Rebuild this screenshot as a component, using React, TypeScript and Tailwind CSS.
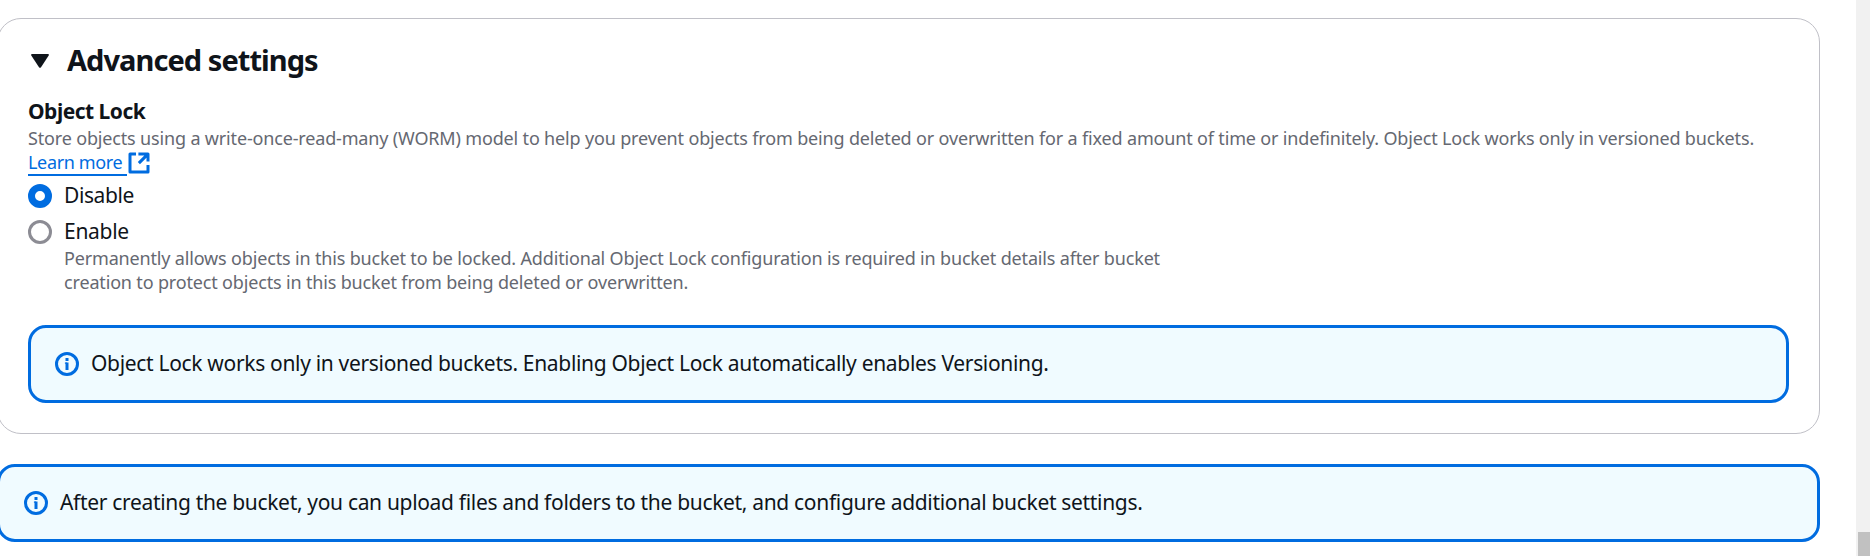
import React from "react";

function InfoIcon() {
  return (
    <svg className="size-6 shrink-0" viewBox="0 0 16 16" fill="none" stroke="#006ce0" strokeWidth="2">
      <circle cx="8" cy="8" r="7" />
      <path d="M8 12V7M8 6V4" />
      <path d="M6.6 7.4H8" strokeWidth=".8" />
    </svg>
  );
}

function ExternalIcon() {
  return (
    <svg className="mt-px size-6 shrink-0" viewBox="0 0 16 16" fill="none" stroke="#006ce0" strokeWidth="2" strokeLinejoin="round">
      <path d="M14 9.4V14H2V2h4M7.6 2H14v5M7.9 8.1l6-6" />
    </svg>
  );
}

function Radio({ checked }: { checked?: boolean }) {
  return checked ? (
    <span className="mt-1 size-6 shrink-0 rounded-full border-[7px] border-[#006ce0] bg-white" />
  ) : (
    <span className="mt-1 size-6 shrink-0 rounded-full border-[3px] border-[#8c8c94] bg-white" />
  );
}

function Alert({ children }: { children: React.ReactNode }) {
  return (
    <div className="flex h-[78px] items-center gap-3 rounded-[18px] border-[3px] border-[#006ce0] bg-[#f0fbff] px-6">
      <InfoIcon />
      {children}
    </div>
  );
}

export default function App() {
  return (
    <div className="flex h-[556px] w-[1870px] justify-between overflow-hidden bg-white font-['Noto_Sans',sans-serif] text-[21px] leading-[30px] text-[#0f141a]">
      <main className="-ml-[3px] flex w-[1823px] shrink-0 flex-col gap-[30px] pt-[18px]">
        <section className="h-[416px] rounded-[24px] border border-[#c0c0c7] px-[30px] pt-[23px]">
          <h2 className="flex h-[54px] items-start text-[29px] leading-9 font-bold">
            <svg className="mt-3 mr-[18px] ml-[3px] h-[14px] w-[18px]" viewBox="0 0 18 14" fill="#0f141a">
              <path d="M1 0h16q1.4.4.7 1.6L10 13.2q-1 1.2-2 0L.3 1.6Q-.4.4 1 0Z" />
            </svg>
            <span className="tracking-[-0.95px]">Advanced settings</span>
          </h2>
          <h3 className="font-bold tracking-[-0.5px]">Object Lock</h3>
          <p className="h-12 text-[18px] leading-6 tracking-[-0.163px] whitespace-nowrap text-[#656871]">
            Store objects using a write-once-read-many (WORM) model to help you prevent objects from being deleted or overwritten for a fixed amount of time or indefinitely. Object Lock works only in versioned buckets.
            <a className="flex items-start tracking-[-0.35px] text-[#006ce0]">
              <span className="h-[26px] w-[99px] border-b-2 border-[#006ce0]">Learn more</span>
              <ExternalIcon />
            </a>
          </p>
          <div className="mt-1.5 flex gap-3">
            <Radio checked />
            <span className="tracking-[-0.4px]">Disable</span>
          </div>
          <div className="mt-1.5 mb-[31px] flex gap-3">
            <Radio />
            <div>
              <div className="tracking-[-0.3px]">Enable</div>
              <p className="text-[18px] leading-6 tracking-[-0.163px] whitespace-nowrap text-[#656871]">
                Permanently allows objects in this bucket to be locked. Additional Object Lock configuration is required in bucket details after bucket
                <br />
                creation to protect objects in this bucket from being deleted or overwritten.
              </p>
            </div>
          </div>
          <Alert>
            <p className="pb-0.5 tracking-[-0.32px]">Object Lock works only in versioned buckets. Enabling Object Lock automatically enables Versioning.</p>
          </Alert>
        </section>
        <Alert>
          <p className="pb-0.5 tracking-[-0.324px]">After creating the bucket, you can upload files and folders to the bucket, and configure additional bucket settings.</p>
        </Alert>
      </main>
      <div className="flex w-[14px] flex-col justify-end bg-[#f1f1f1] pl-0.5">
        <div className="h-6 bg-[#c1c1c1]" />
      </div>
    </div>
  );
}
